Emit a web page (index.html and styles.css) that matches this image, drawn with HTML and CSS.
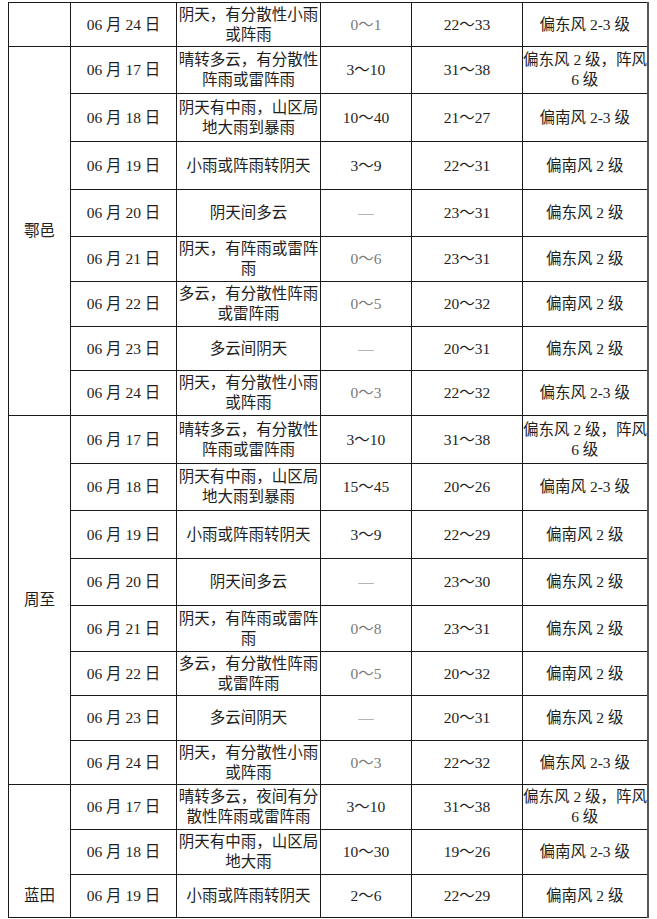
FILE: index.html
```html
<!DOCTYPE html>
<html lang="zh-CN">
<head>
<meta charset="utf-8">
<title>天气预报</title>
<link rel="stylesheet" href="styles.css">
</head>
<body>
<table class="fc">
  <colgroup>
    <col class="c-region"><col class="c-date"><col class="c-wx"><col class="c-rain"><col class="c-temp"><col class="c-wind">
  </colgroup>
  <tbody>
    <tr class="h44"><td class="region"></td><td>06 月 24 日</td><td>阴天，有分散性小雨<br>或阵雨</td><td class="dim">0～1</td><td>22～33</td><td>偏东风 2-3 级</td></tr>

    <tr class="h47 grp"><td class="region" rowspan="8">鄠邑</td><td>06 月 17 日</td><td>晴转多云，有分散性<br>阵雨或雷阵雨</td><td>3～10</td><td>31～38</td><td>偏东风 2 级，阵风<br>6 级</td></tr>
    <tr class="h48"><td>06 月 18 日</td><td>阴天有中雨，山区局<br>地大雨到暴雨</td><td>10～40</td><td>21～27</td><td>偏南风 2-3 级</td></tr>
    <tr class="h48"><td>06 月 19 日</td><td>小雨或阵雨转阴天</td><td>3～9</td><td>22～31</td><td>偏南风 2 级</td></tr>
    <tr class="h47"><td>06 月 20 日</td><td>阴天间多云</td><td class="dim">—</td><td>23～31</td><td>偏东风 2 级</td></tr>
    <tr class="h45"><td>06 月 21 日</td><td>阴天，有阵雨或雷阵<br>雨</td><td class="dim">0～6</td><td>23～31</td><td>偏东风 2 级</td></tr>
    <tr class="h45"><td>06 月 22 日</td><td>多云，有分散性阵雨<br>或雷阵雨</td><td class="dim">0～5</td><td>20～32</td><td>偏南风 2 级</td></tr>
    <tr class="h44"><td>06 月 23 日</td><td>多云间阴天</td><td class="dim">—</td><td>20～31</td><td>偏东风 2 级</td></tr>
    <tr class="h45"><td>06 月 24 日</td><td>阴天，有分散性小雨<br>或阵雨</td><td class="dim">0～3</td><td>22～32</td><td>偏东风 2-3 级</td></tr>

    <tr class="h48 grp"><td class="region" rowspan="8">周至</td><td>06 月 17 日</td><td>晴转多云，有分散性<br>阵雨或雷阵雨</td><td>3～10</td><td>31～38</td><td>偏东风 2 级，阵风<br>6 级</td></tr>
    <tr class="h47"><td>06 月 18 日</td><td>阴天有中雨，山区局<br>地大雨到暴雨</td><td>15～45</td><td>20～26</td><td>偏南风 2-3 级</td></tr>
    <tr class="h48"><td>06 月 19 日</td><td>小雨或阵雨转阴天</td><td>3～9</td><td>22～29</td><td>偏南风 2 级</td></tr>
    <tr class="h47"><td>06 月 20 日</td><td>阴天间多云</td><td class="dim">—</td><td>23～30</td><td>偏东风 2 级</td></tr>
    <tr class="h46"><td>06 月 21 日</td><td>阴天，有阵雨或雷阵<br>雨</td><td class="dim">0～8</td><td>23～31</td><td>偏东风 2 级</td></tr>
    <tr class="h44"><td>06 月 22 日</td><td>多云，有分散性阵雨<br>或雷阵雨</td><td class="dim">0～5</td><td>20～32</td><td>偏南风 2 级</td></tr>
    <tr class="h45"><td>06 月 23 日</td><td>多云间阴天</td><td class="dim">—</td><td>20～31</td><td>偏东风 2 级</td></tr>
    <tr class="h44"><td>06 月 24 日</td><td>阴天，有分散性小雨<br>或阵雨</td><td class="dim">0～3</td><td>22～32</td><td>偏东风 2-3 级</td></tr>

    <tr class="h45 grp"><td class="region last" rowspan="3">蓝田</td><td>06 月 17 日</td><td>晴转多云，夜间有分<br>散性阵雨或雷阵雨</td><td>3～10</td><td>31～38</td><td>偏东风 2 级，阵风<br>6 级</td></tr>
    <tr class="h45"><td>06 月 18 日</td><td>阴天有中雨，山区局<br>地大雨</td><td>10～30</td><td>19～26</td><td>偏南风 2-3 级</td></tr>
    <tr class="h43"><td>06 月 19 日</td><td>小雨或阵雨转阴天</td><td>2～6</td><td>22～29</td><td>偏南风 2 级</td></tr>
  </tbody>
</table>
</body>
</html>
```

FILE: styles.css
```css
html, body {
  background: #ffffff;
}
body {
  margin: 0;
  padding: 2px 0 0 8px;
  font-family: "Liberation Serif", "Noto Sans CJK SC", serif;
  font-size: 15.5px;
  color: #1e1e1e;
}
.fc {
  border-collapse: collapse;
  table-layout: fixed;
  width: 639px;
  border-right: 2px solid #555;
}
.c-region { width: 62px; }
.c-date { width: 106px; }
.c-wx { width: 144px; }
.c-rain { width: 91px; }
.c-temp { width: 111px; }
.c-wind { width: 125px; }

.fc td {
  border: 1px solid #1a1a1a;
  padding: 0;
  text-align: center;
  vertical-align: middle;
  line-height: 20px;
  white-space: nowrap;
  overflow: visible;
}
.fc td:last-child {
  border-right: 2px solid #555;
}
.fc td.region.last {
  vertical-align: bottom;
  padding-bottom: 11px;
}
.fc td.dim {
  color: #7a7a7a;
}
.h43 { height: 43px; }
.h44 { height: 44px; }
.h45 { height: 45px; }
.h46 { height: 46px; }
.h47 { height: 47px; }
.h48 { height: 48px; }
```
